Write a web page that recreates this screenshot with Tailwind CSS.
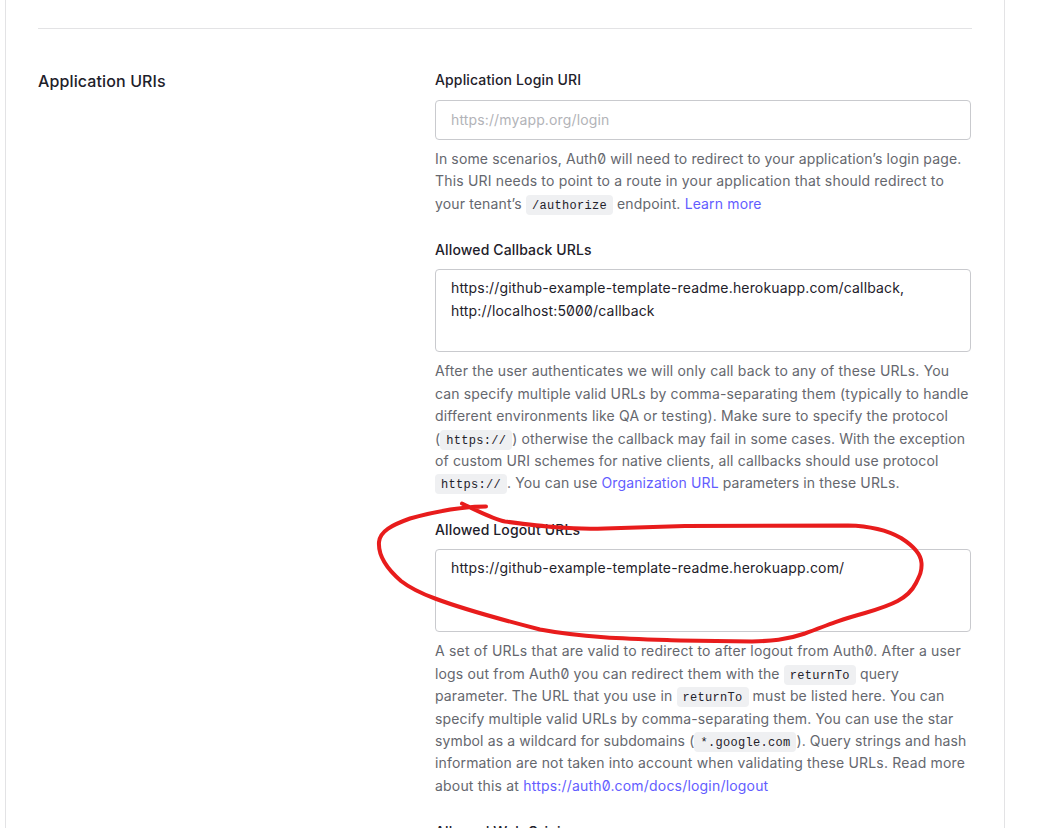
<!DOCTYPE html>
<html lang="en">
<head>
<meta charset="utf-8">
<title>Application URIs</title>
<script src="https://cdn.jsdelivr.net/npm/@tailwindcss/browser@4"></script>
</head>
<body class="h-[828px] overflow-hidden bg-white font-['Inter',sans-serif] text-[14px] leading-[22.4px] text-[#65676e] [font-feature-settings:'zero']">
<main class="relative ml-[5px] h-[828px] w-[1000px] overflow-hidden border-x border-[#e3e3e5] px-8 pt-7">
  <hr class="w-[934px] border-[#e3e3e5]">
  <div class="flex pt-10">
    <h2 class="w-[397px] shrink-0 text-[16px] leading-6 font-medium tracking-[0.12px] text-[#1e212a]">Application URIs</h2>
    <div class="w-[536px] shrink-0 whitespace-nowrap">
      <section class="h-[170px]">
        <label class="block h-[31px] font-medium tracking-[0.14px] text-[#1e212a]">Application Login URI</label>
        <input class="block h-10 w-full rounded-[4px] border border-[#c9cace] px-[15px] pb-0.5 tracking-[0.14px] placeholder:text-[#b2b3b8]" placeholder="https://myapp.org/login">
        <p class="pt-2 tracking-[0.14px]"><span class="tracking-[0.13px]">In some scenarios, Auth0 will need to redirect to your application’s login page.</span><br><span class="tracking-[0.18px]">This URI needs to point to a route in your application that should redirect to</span><br>your tenant’s <code class="rounded-[4px] bg-[#eff0f2] px-1.5 pt-1 pb-0.5 font-['Liberation_Mono',monospace] text-[12px] leading-none tracking-[0.3px] text-[#1e212a]">/authorize</code> endpoint. <a class="text-[#635dff]">Learn more</a></p>
      </section>
      <section class="h-[280px]">
        <label class="block h-[30px] font-medium tracking-[0.14px] text-[#1e212a]">Allowed Callback URLs</label>
        <div class="h-[83px] w-full rounded-[4px] border border-[#c9cace] px-[15px] pt-[7.4px] tracking-[0.165px] text-[#1e212a]">https://github-example-template-readme.herokuapp.com/callback,<br>http://localhost:5000/callback</div>
        <p class="pt-[8.4px] tracking-[0.14px]"><span class="tracking-[0.165px]">After the user authenticates we will only call back to any of these URLs. You</span><br>can specify multiple valid URLs by comma-separating them (typically to handle<br><span class="tracking-[0.165px]">different environments like QA or testing). Make sure to specify the protocol</span><br>(<code class="rounded-[4px] bg-[#eff0f2] px-1.5 pt-1 pb-0.5 font-['Liberation_Mono',monospace] text-[12px] leading-none tracking-[0.3px] text-[#1e212a]">https://</code>) otherwise the callback may fail in some cases. With the exception<br><span class="tracking-[0.13px]">of custom URI schemes for native clients, all callbacks should use protocol</span><br><code class="rounded-[4px] bg-[#eff0f2] px-1.5 pt-1 pb-0.5 font-['Liberation_Mono',monospace] text-[12px] leading-none tracking-[0.3px] text-[#1e212a]">https://</code><span class="tracking-[0.11px]">. You can use <a class="text-[#635dff]">Organization URL</a> parameters in these URLs.</span></p>
      </section>
      <section class="h-[302px]">
        <label class="block h-[30px] font-medium tracking-[0.14px] text-[#1e212a]">Allowed Logout URLs</label>
        <div class="h-[83px] w-full rounded-[4px] border border-[#c9cace] px-[15px] pt-[7.4px] tracking-[0.175px] text-[#1e212a]">https://github-example-template-readme.herokuapp.com/</div>
        <p class="pt-[8.4px] tracking-[0.14px]"><span class="tracking-[0.19px]">A set of URLs that are valid to redirect to after logout from Auth0. After a user</span><br><span class="tracking-[0.165px]">logs out from Auth0 you can redirect them with the <code class="rounded-[4px] bg-[#eff0f2] px-1.5 pt-1 pb-0.5 font-['Liberation_Mono',monospace] text-[12px] leading-none tracking-[0.3px] text-[#1e212a]">returnTo</code> query</span><br>parameter. The URL that you use in <code class="rounded-[4px] bg-[#eff0f2] px-1.5 pt-1 pb-0.5 font-['Liberation_Mono',monospace] text-[12px] leading-none tracking-[0.3px] text-[#1e212a]">returnTo</code> <span class="tracking-[0.165px]">must be listed here. You can</span><br>specify multiple valid URLs by comma-separating them. You can use the star<br><span class="tracking-[0.12px]">symbol as a wildcard for subdomains (<code class="rounded-[4px] bg-[#eff0f2] px-1.5 pt-1 pb-0.5 font-['Liberation_Mono',monospace] text-[12px] leading-none tracking-[0.3px] text-[#1e212a]">*.google.com</code>). Query strings and hash</span><br><span class="tracking-[0.165px]">information are not taken into account when validating these URLs. Read more</span><br><span class="tracking-[0.19px]">about this at <a class="text-[#635dff]">https://auth0.com/docs/login/logout</a></span></p>
      </section>
      <label class="block font-medium tracking-[0.14px] text-[#1e212a]">Allowed Web Origins</label>
    </div>
  </div>
</main>
<!-- Freehand highlight around the logout URLs field -->
<svg class="pointer-events-none absolute left-0 top-0" width="1052" height="828" fill="none" stroke="#e81c1c" stroke-width="4" stroke-linecap="round" stroke-linejoin="round">
  <path d="M486 506.500C460 506.500 437 511 410 518.500C392 525 380 531 379 542C378 556 387 569 401 581C410 588 420 593 435 598.500C463 609 503 620 540 629.500C585 638 638 639 680 640.500L752 641.500C771 641 786 640 805 633.500C835 622 840 620 865 613C892 605 908 599 916 583C920 575 922 571 921.500 563C921 553 912 545 901 538C887 530 871 526 848 525.500L685 526L605 528.500C570 530 540 526 505 521.500C494 519.500 480 512 462 503.500"/>
</svg>
</body>
</html>
